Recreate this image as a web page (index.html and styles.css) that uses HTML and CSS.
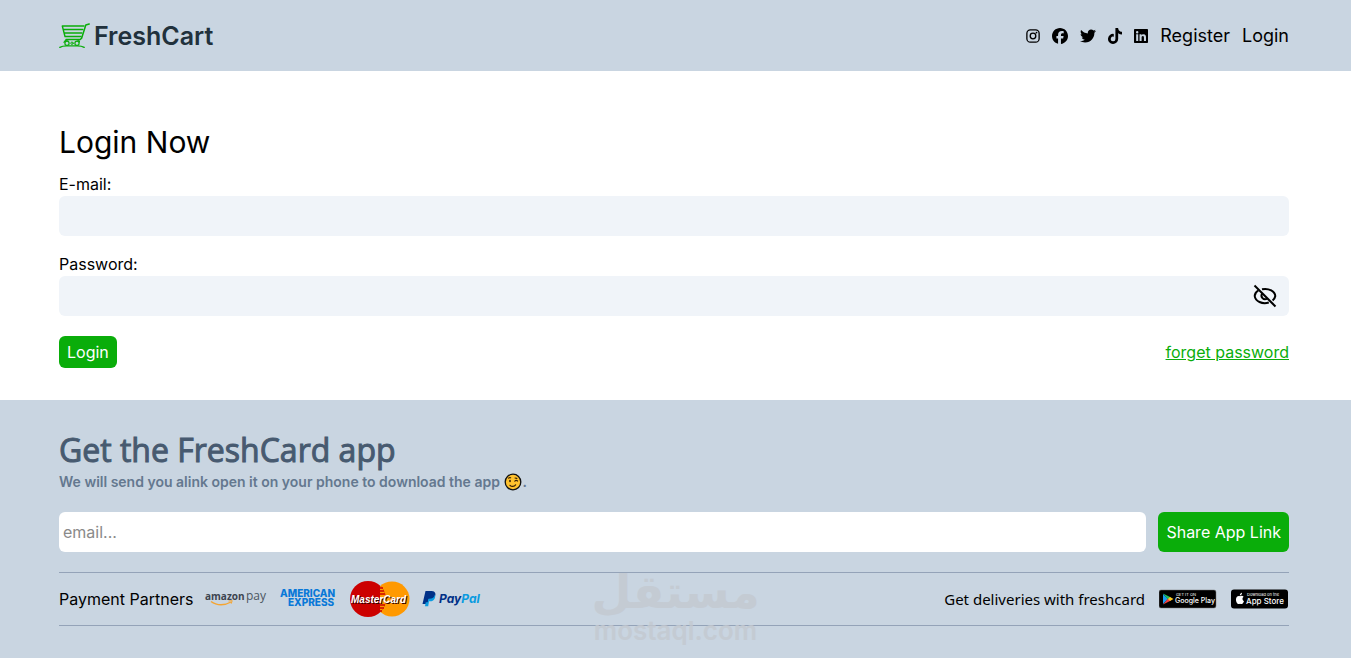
FILE: index.html
```html
<!DOCTYPE html>
<html lang="en">
<head>
<meta charset="utf-8">
<meta name="viewport" content="width=device-width, initial-scale=1">
<title>FreshCart</title>
<link rel="stylesheet" href="styles.css">
</head>
<body>
<header class="navbar">
  <div class="container navbar-row">
    <a class="brand" href="#">
      <svg class="brand-icon" viewBox="0 0 31 26" aria-hidden="true" fill="none" stroke="#0aad0a" stroke-linecap="round" stroke-linejoin="round">
        <path stroke-width="1.5" d="M30.200 1 26.800 2 22.600 15.200 21 16.600H7"/>
        <path stroke-width="1.400" d="M25 3H3.300L6 13.500h16M4.500 6.500h19.300M5.300 10h17.500"/>
        <path stroke-width="1.100" d="M5 19.500c.3-2 1.500-2.500 4-2.500M20.500 19c0-1.500-.7-2-2-2"/>
        <path stroke-width="1.300" d="M.8 24.400c2-1.300 4-1.600 7-1.600h10.400c3 0 5 .3 7 1.600"/>
        <circle cx="8" cy="20.200" r="2.100" stroke-width="1.200"/>
        <circle cx="18" cy="20.200" r="2.100" stroke-width="1.200"/>
        <circle cx="13" cy="20.200" r="1.200" stroke-width="1"/>
      </svg>
      <span class="brand-name">FreshCart</span>
    </a>
    <nav class="nav-links">
      <a class="social social-round" href="#" aria-label="Instagram"><svg viewBox="0 0 16 16" fill="none" stroke="#000" stroke-width="1.500"><rect x="1" y="1" width="14" height="14" rx="4"/><circle cx="8" cy="8" r="3.200"/><circle cx="12" cy="4" r="1" fill="#000" stroke="none"/></svg></a>
      <a class="social" href="#" aria-label="Facebook"><svg viewBox="0 0 512 512"><path d="M512 256C512 114.600 397.400 0 256 0S0 114.600 0 256c0 120 82.700 220.800 194.200 248.500V334.200h-52.800V256h52.800v-33.700c0-87.100 39.400-127.500 125-127.500 16.200 0 44.200 3.200 55.700 6.400V172c-6-.6-16.500-1-29.600-1-42 0-58.200 15.900-58.200 57.200V256h83.600l-14.400 78.200h-69.300v175.900C413.800 494.800 512 386.900 512 256z"/></svg></a>
      <a class="social" href="#" aria-label="Twitter"><svg viewBox="0 0 512 512"><path d="M459.400 151.700c.3 4.500.3 9.100.3 13.600 0 138.700-105.600 298.600-298.600 298.600-59.500 0-114.700-17.200-161.100-47.100 8.400 1 16.600 1.300 25.300 1.300 49.100 0 94.200-16.600 130.300-44.800-46.100-1-84.800-31.200-98.100-72.800 6.500 1 13 1.600 19.800 1.600 9.400 0 18.800-1.300 27.600-3.600-48.100-9.700-84.100-52-84.100-103v-1.300c14 7.800 30.200 12.700 47.400 13.300-28.300-18.800-46.800-51-46.800-87.400 0-19.500 5.200-37.400 14.300-53 51.700 63.700 129.300 105.300 216.400 109.800-1.600-7.800-2.600-15.900-2.600-24 0-57.800 46.800-104.900 104.900-104.900 30.200 0 57.500 12.700 76.700 33.100 23.700-4.500 46.500-13.300 66.600-25.300-7.800 24.400-24.400 44.800-46.100 57.800 21.100-2.300 41.600-8.100 60.400-16.200-14.300 20.800-32.200 39.300-52.600 54.300z"/></svg></a>
      <a class="social social-narrow" href="#" aria-label="TikTok"><svg viewBox="0 0 448 512"><path d="M448 209.900a210.100 210.100 0 0 1-122.800-39.300v178.800A162.600 162.600 0 1 1 185 188.300v89.900a74.600 74.600 0 1 0 52.200 71.200V0h88a121.200 121.200 0 0 0 1.900 22.200 122.200 122.200 0 0 0 53.900 80.200 121.400 121.400 0 0 0 67 20.100z"/></svg></a>
      <a class="social social-narrow" href="#" aria-label="LinkedIn"><svg viewBox="0 0 448 512"><path d="M416 32H32C14 32 0 46.500 0 64.300v383.400C0 465.500 14 480 32 480h384c18 0 32-14.500 32-32.300V64.300C448 46.500 434 32 416 32zM135 416H69V202h66zm-33-243a38.500 38.500 0 1 1 0-77 38.500 38.500 0 0 1 0 77zm282 243h-66V312c0-25-1-57-35-57s-40 27-40 55v106h-66V202h64v29h1c9-17 30-35 63-35 67 0 79 44 79 102z"/></svg></a>
      <a class="nav-link" href="#">Register</a>
      <a class="nav-link" href="#">Login</a>
    </nav>
  </div>
</header>

<main class="container login">
  <h1 class="login-title">Login Now</h1>
  <form>
    <label class="label" for="email">E-mail:</label>
    <input class="field" id="email" type="email">
    <label class="label" for="password">Password:</label>
    <div class="password-box">
      <input class="field" id="password" type="password">
      <button class="eye" type="button" aria-label="Show password">
        <svg viewBox="0 0 24 24" fill="none" stroke="#000" stroke-width="2"><path d="M1.500 1.500 22.500 22.500"/><path d="M9 5.300C16 3.700 22 7.500 22.300 12c-.3 1.800-1.200 3.300-2.700 4.500M5.300 6.500C3 7.900 1.700 9.800 1.700 12c.6 5.300 7.500 8.500 14.100 6.500"/><path d="M9.200 9.500c-2.200 3.400 1.300 7.200 5 5.100"/></svg>
      </button>
    </div>
    <div class="form-actions">
      <button class="btn" type="submit">Login</button>
      <a class="forgot" href="#">forget password</a>
    </div>
  </form>
</main>

<footer class="footer">
  <div class="container">
    <h2 class="footer-title">Get the FreshCard app</h2>
    <p class="footer-text">We will send you alink open it on your phone to download the app
      <svg class="wink" viewBox="0 0 18 18" role="img" aria-label="wink"><circle cx="9" cy="9" r="7.800" fill="#ffc22e" stroke="#111" stroke-width="1.300"/><g fill="none" stroke="#3a2208" stroke-width="1.200" stroke-linecap="round"><path d="M6 12.300c1.500 1.600 4.200 1.500 5.600-.5M10.800 8.200c.8-.8 2-.8 2.800-.2M4.600 5.200c.6-.6 1.400-.7 2-.4M11 5l1.800.3"/></g><ellipse cx="6" cy="8" rx=".9" ry="1.200" fill="#3a2208"/></svg>.</p>
    <form class="share">
      <input class="share-input" type="email" placeholder="email..." aria-label="Email">
      <button class="btn btn-tall" type="submit">Share App Link</button>
    </form>
    <div class="partners">
      <div class="payments">
        <span>Payment Partners</span>
        <svg class="pay-logo" viewBox="0 0 60 40" role="img" aria-label="Amazon Pay"><text class="amazon" x="0" y="21" fill="#3c444f">amazon</text><text class="amazon-pay" x="41" y="21" fill="#4c5560">pay</text><path d="M6 22.500c6 4.500 14 4 20 .5" fill="none" stroke="#f5a430" stroke-width="1.400"/><path d="m23.500 22 3.700-.3-1 3" fill="none" stroke="#f5a430"/></svg>
        <svg class="pay-logo" viewBox="0 0 60 40" role="img" aria-label="American Express"><g class="amex" fill="#0878d8"><text x="3" y="18">AMERICAN</text><text x="11" y="27">EXPRESS</text></g></svg>
        <svg class="pay-logo" viewBox="0 0 60 40" role="img" aria-label="MasterCard"><circle cx="43" cy="20" r="17.500" fill="#f90"/><circle cx="19" cy="20" r="18" fill="#c00"/><path d="M31 6.600a18 18 0 0 1 0 26.800z" fill="#f90"/><path d="M31 6.600v26.800a18 18 0 0 1 0-26.800z" fill="#c00"/><path d="M28 9h6M26 12h9M25 15h11M25 26h11M26 29h9M28 32h5" stroke="#c00" stroke-width="1.400"/><text class="master" x="2" y="24" fill="#fff">MasterCard</text></svg>
        <svg class="pay-logo" viewBox="0 0 60 40" role="img" aria-label="PayPal"><path d="M4.500 12h6.300c3.500.2 4.500 3 3 5.700-1.200 2.200-3.400 2.800-6.300 2.800L6.600 25H1.500z" fill="#003087"/><path d="M13.800 15.500c1.400 3-.8 6.800-4.600 6.800H8l-.8 5H4l.7-4h2l.8-3.500c4 .1 5.900-1.200 6.300-4.300z" fill="#0a9be0"/><text class="paypal" x="18" y="24"><tspan fill="#003087">Pay</tspan><tspan fill="#0a9be0">Pal</tspan></text></svg>
      </div>
      <div class="stores">
        <span class="stores-text">Get deliveries with freshcard</span>
        <a href="#" class="store" aria-label="Google Play"><svg viewBox="0 0 58 20"><rect x="0" y="1" width="57" height="18" rx="2" fill="#000" stroke="#777" stroke-width=".5"/><path d="m4 5 5 5-5 5z" fill="#1a9cf0"/><path d="m4 4.500 8 4-3 2z" fill="#20c060"/><path d="m4 15.500 8-4-3-2z" fill="#f04040"/><path d="m11 8 3.500 2-3.500 2-2-2z" fill="#ffca20"/><g fill="#fff"><text class="store-small" x="17" y="7">GET IT ON</text><text class="store-name" x="16" y="14">Google Play</text></g></svg></a>
        <a href="#" class="store" aria-label="App Store"><svg viewBox="0 0 58 20"><rect x="0" y=".5" width="57" height="19" rx="3" fill="#000"/><path d="M9 7.200c1.300-.9 2.800-.6 3.600.5-1.700 1-1.500 3.700.4 4.500-.8 2-1.800 3.600-4 2.600-2.300 1.200-4.300-1.800-4-4.800.3-2.600 2.200-3.600 4-2.800zM8.800 6.500c0-1.500.9-2.500 2.200-2.800 0 1.600-.9 2.600-2.200 2.800z" fill="#fff"/><g fill="#fff"><text class="store-small" x="16" y="7">Download on the</text><text class="store-name app-name" x="15" y="15">App Store</text></g></svg></a>
      </div>
    </div>
  </div>
  <div class="watermark" aria-hidden="true">
    <span class="watermark-ar" lang="ar" dir="rtl">مستقل</span>
    <span class="watermark-en">mostaql.com</span>
  </div>
</footer>
</body>
</html>
```
FILE: styles.css
```css
* { box-sizing: border-box; }

body {
  margin: 0;
  font-family: Inter, "Liberation Sans", sans-serif;
  font-size: 16px;
  line-height: 24px;
  color: #000;
  background: #fff;
}

h1, h2, p { margin: 0; }
a { color: inherit; text-decoration: none; }
button, input { font: inherit; }
svg { display: block; }

.container { padding: 0 62px 0 59px; }

.navbar { background: #c9d5e1; }

.navbar-row {
  display: flex;
  align-items: center;
  justify-content: space-between;
  min-height: 71px;
}

.brand { display: flex; align-items: center; gap: 4px; }
.brand-icon { width: 31px; height: 26px; }

.brand-name {
  font-size: 25px;
  line-height: 32px;
  font-weight: 600;
  color: #21313c;
}

.nav-links { display: flex; align-items: center; gap: 12px; }
.social svg { width: 16px; height: 16px; }
.social-round svg { width: 14px; height: 14px; }
.social-narrow svg { width: 14px; }
.nav-link { font-size: 18px; line-height: 28px; }

.login { padding-top: 53px; padding-bottom: 32px; }

.login-title {
  margin-bottom: 12px;
  font-size: 30px;
  line-height: 36px;
  font-weight: 400;
}

.label { display: block; }

.field {
  display: block;
  width: 100%;
  height: 40px;
  margin-bottom: 16px;
  padding: 8px;
  border: 0;
  border-radius: 6px;
  background: #f0f4f9;
}

.password-box { position: relative; margin-bottom: 20px; }
.password-box .field { margin: 0; padding-right: 40px; }

.eye {
  position: absolute;
  top: 8px;
  right: 12px;
  padding: 0;
  border: 0;
  background: none;
}

.eye svg { width: 24px; height: 24px; }

.form-actions { display: flex; align-items: center; justify-content: space-between; }

.btn {
  padding: 4px 8px;
  border: 0;
  border-radius: 6px;
  background: #0aad0a;
  color: #fff;
}

.btn-tall { padding: 8px; }
.forgot { color: #0aad0a; text-decoration: underline; }

.footer {
  position: relative;
  padding: 30px 0 32px;
  background: #c9d5e1;
}

.footer-title {
  margin-bottom: 2px;
  font-family: "Open Sans", "Noto Sans", sans-serif;
  font-size: 32px;
  line-height: 40px;
  font-weight: 400;
  -webkit-text-stroke: 1px #475a70;
  color: #475a70;
}

.footer-text {
  margin-bottom: 20px;
  font-size: 14px;
  line-height: 20px;
  font-weight: 600;
  color: #64788f;
}

.wink {
  display: inline-block;
  width: 18px;
  height: 18px;
  margin-left: 1px;
  vertical-align: -4px;
}

.share { display: flex; gap: 12px; margin-bottom: 20px; }

.share-input {
  flex: 1;
  min-width: 0;
  height: 40px;
  padding: 4px;
  border: 0;
  border-radius: 6px;
  background: #fff;
}

.share-input::placeholder { color: #8a8a8a; }

.partners {
  display: flex;
  align-items: center;
  justify-content: space-between;
  min-height: 54px;
  border-top: 1px solid #94a3b8;
  border-bottom: 1px solid #94a3b8;
}

.payments, .stores { display: flex; align-items: center; gap: 12px; }
.pay-logo { width: 60px; height: 40px; overflow: visible; }
.stores { gap: 14px; }
.stores-text { font-family: "Noto Sans", sans-serif; font-size: 15px; }
.store svg { width: 58px; height: 20px; }

.amazon { font: 700 10px "Open Sans", sans-serif; }
.amazon-pay { font: 400 12px "Open Sans", sans-serif; }
.amex { font: 800 10px Inter, sans-serif; }
.master { font: italic 700 10px "Liberation Sans", sans-serif; text-shadow: 1px 1px 0 #300; }
.paypal { font: italic 700 12px Inter, sans-serif; }
.store-small { font: 400 4px Inter, sans-serif; }
.store-name { font: 500 7px Inter, sans-serif; }
.app-name { font-size: 8px; }

.watermark {
  position: absolute;
  top: 166px;
  left: 50%;
  display: flex;
  flex-direction: column;
  align-items: center;
  transform: translateX(-50%);
  color: #c4c9d0;
  opacity: 0.8;
  pointer-events: none;
}

.watermark-ar { font: 700 46px/52px "DejaVu Sans", sans-serif; }
.watermark-en { font: 600 26px/26px Inter, sans-serif; }
```
